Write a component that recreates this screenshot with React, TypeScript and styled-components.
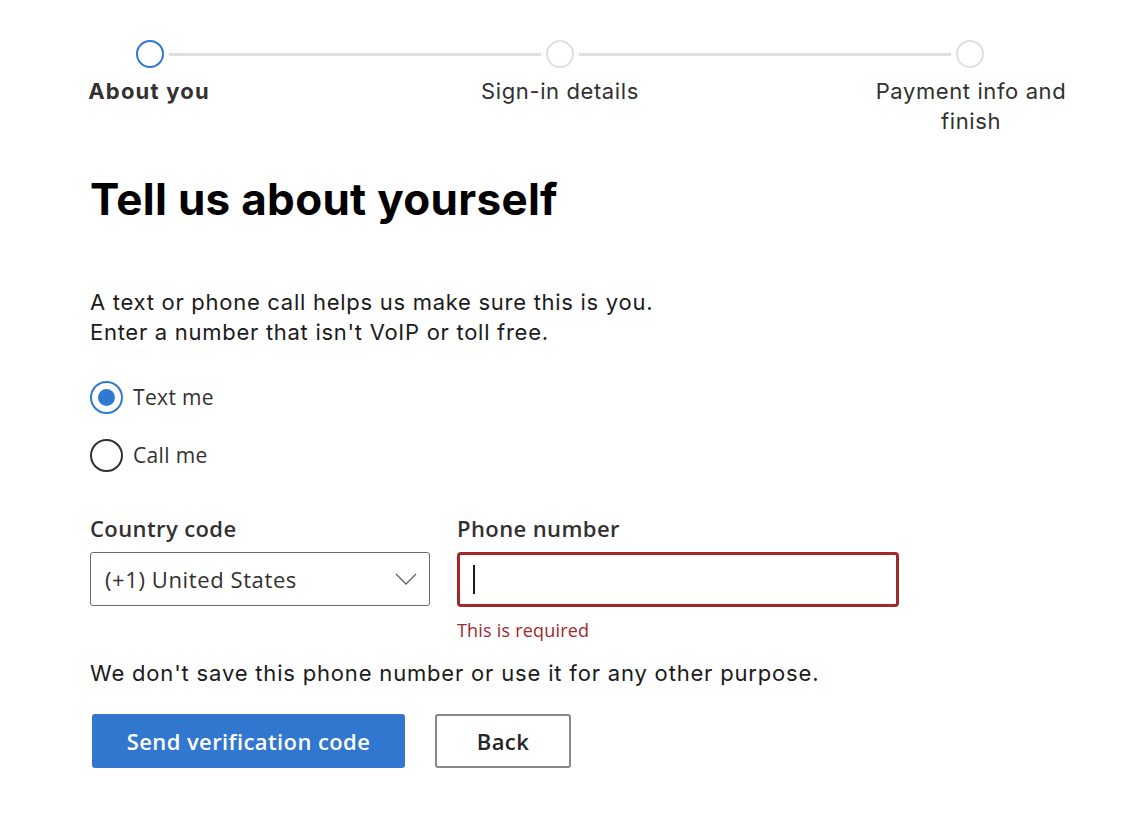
import React, { useState } from "react"
import styled, { createGlobalStyle } from "styled-components"

const GlobalStyle = createGlobalStyle`
    body {
        margin: 0;
        background: #fff;
        font-family: Inter, "Liberation Sans", sans-serif;
        color: #1b1b1b;
    }
`

const Page = styled.div`
    padding: 40px 0 0 90px;
    width: 1122px;
    box-sizing: border-box;
`

// progress indicator across the top
const Stepper = styled.div`
    margin-left: -41px;
    width: 1030px;
`

const Track = styled.div`
    display: flex;
    align-items: center;
    margin-left: 87px;
    width: 848px;
`

const Dot = styled.div<{ $active?: boolean }>`
    width: 24px;
    height: 24px;
    border-radius: 50%;
    border: 2px solid ${(p) => (p.$active ? "#2f7ad0" : "#e1dfdd")};
    flex: none;
`

const Line = styled.div`
    flex: 1;
    height: 3px;
    background: #e1dfdd;
    margin: 0 5px;
`

const StepLabels = styled.div`
    display: grid;
    grid-template-columns: repeat(3, 200px);
    column-gap: 211px;
    margin-top: 8px;
`

const StepLabel = styled.div<{ $current?: boolean }>`
    text-align: center;
    font-size: 22px;
    line-height: 30px;
    letter-spacing: ${(p) => (p.$current ? "1.2px" : "0.6px")};
    color: #323130;
    font-weight: ${(p) => (p.$current ? 700 : 400)};
`

const Title = styled.h1`
    margin: 35px 0 0;
    font-size: 44px;
    line-height: 56px;
    font-weight: 700;
    letter-spacing: 0.3px;
    color: #000;
`

const Intro = styled.p`
    margin: 60px 0 0;
    font-size: 22px;
    line-height: 30px;
    letter-spacing: 0.72px;
    color: #1b1b1b;
`

const RadioGroup = styled.div`
    margin-top: 33px;
    display: flex;
    flex-direction: column;
    gap: 24px;
`

const RadioRow = styled.label`
    display: flex;
    align-items: center;
    gap: 10px;
    height: 34px;
    font-family: "Open Sans", "Noto Sans", sans-serif;
    font-size: 21px;
    letter-spacing: 0.35px;
    color: #323130;
    cursor: pointer;
`

const RadioCircle = styled.span<{ $checked?: boolean }>`
    width: 33px;
    height: 33px;
    border-radius: 50%;
    box-sizing: border-box;
    border: 2px solid ${(p) => (p.$checked ? "#2f7ad0" : "#323130")};
    display: flex;
    align-items: center;
    justify-content: center;

    &::after {
        content: "";
        width: 17px;
        height: 17px;
        border-radius: 50%;
        background: ${(p) => (p.$checked ? "#2f7ad0" : "transparent")};
    }
`

const FieldRow = styled.div`
    display: flex;
    gap: 27px;
    margin-top: 41px;
`

const Field = styled.div<{ $width: number }>`
    width: ${(p) => p.$width}px;
    display: flex;
    flex-direction: column;
`

const FieldLabel = styled.div`
    font-family: "Open Sans", "Noto Sans", sans-serif;
    font-size: 22px;
    font-weight: 600;
    line-height: 30px;
    letter-spacing: 0.4px;
    color: #323130;
    margin-bottom: 9px;
`

const SelectBox = styled.div`
    height: 54px;
    box-sizing: border-box;
    border: 1.5px solid #6b6b6b;
    border-radius: 3px;
    display: flex;
    align-items: center;
    justify-content: space-between;
    padding: 0 12px 0 14px;
    font-family: "Open Sans", "Noto Sans", sans-serif;
    font-size: 22px;
    letter-spacing: 0.6px;
    color: #323130;
`

const InputBox = styled.div`
    height: 55px;
    box-sizing: border-box;
    border: 3px solid #a1282d;
    border-radius: 4px;
    padding: 0 13px;
    display: flex;
    align-items: center;
    background: #fff;
`

const Caret = styled.span`
    width: 1.5px;
    height: 29px;
    background: #1b1b1b;
`

const ErrorText = styled.div`
    margin-top: 11px;
    font-family: "Open Sans", "Noto Sans", sans-serif;
    font-size: 18px;
    line-height: 24px;
    letter-spacing: 0.2px;
    color: #a1282d;
`

const Note = styled.p`
    margin: 16px 0 0;
    font-size: 22px;
    line-height: 30px;
    letter-spacing: 0.82px;
    color: #1b1b1b;
`

const Actions = styled.div`
    display: flex;
    gap: 30px;
    margin-top: 26px;
    padding-left: 2px;
`

const Button = styled.button<{ $primary?: boolean }>`
    height: 54px;
    box-sizing: border-box;
    border-radius: 3px;
    font-family: "Open Sans", "Noto Sans", sans-serif;
    font-size: 22px;
    font-weight: 600;
    letter-spacing: 0.4px;
    cursor: pointer;
    padding: 0;
    width: ${(p) => (p.$primary ? "313px" : "136px")};
    background: ${(p) => (p.$primary ? "#3277cf" : "#fff")};
    color: ${(p) => (p.$primary ? "#fff" : "#262626")};
    border: ${(p) => (p.$primary ? "none" : "2px solid #8a8886")};
`

const Chevron = () => (
    <svg width="22" height="12" viewBox="0 0 22 12" fill="none">
        <path d="M1 1l10 10L21 1" stroke="#605e5c" strokeWidth="1.3" />
    </svg>
)

const steps = ["About you", "Sign-in details", "Payment info and finish"]

function App() {
    const [method, setMethod] = useState("text")

    return (
        <>
            <GlobalStyle />
            <Page>
                <Stepper>
                    <Track>
                        <Dot $active />
                        <Line />
                        <Dot />
                        <Line />
                        <Dot />
                    </Track>
                    <StepLabels>
                        {steps.map((s, i) => (
                            <StepLabel key={s} $current={i === 0}>{s}</StepLabel>
                        ))}
                    </StepLabels>
                </Stepper>

                <Title>Tell us about yourself</Title>

                <Intro>
                    A text or phone call helps us make sure this is you.
                    <br />
                    Enter a number that isn't VoIP or toll free.
                </Intro>

                <RadioGroup>
                    <RadioRow onClick={() => setMethod("text")}>
                        <RadioCircle $checked={method === "text"} />
                        Text me
                    </RadioRow>
                    <RadioRow onClick={() => setMethod("call")}>
                        <RadioCircle $checked={method === "call"} />
                        Call me
                    </RadioRow>
                </RadioGroup>

                <FieldRow>
                    <Field $width={340}>
                        <FieldLabel>Country code</FieldLabel>
                        <SelectBox>
                            (+1) United States
                            <Chevron />
                        </SelectBox>
                    </Field>
                    <Field $width={442}>
                        <FieldLabel>Phone number</FieldLabel>
                        <InputBox>
                            <Caret />
                        </InputBox>
                        <ErrorText>This is required</ErrorText>
                    </Field>
                </FieldRow>

                <Note>We don't save this phone number or use it for any other purpose.</Note>

                <Actions>
                    <Button $primary>Send verification code</Button>
                    <Button>Back</Button>
                </Actions>
            </Page>
        </>
    )
}

export default App
